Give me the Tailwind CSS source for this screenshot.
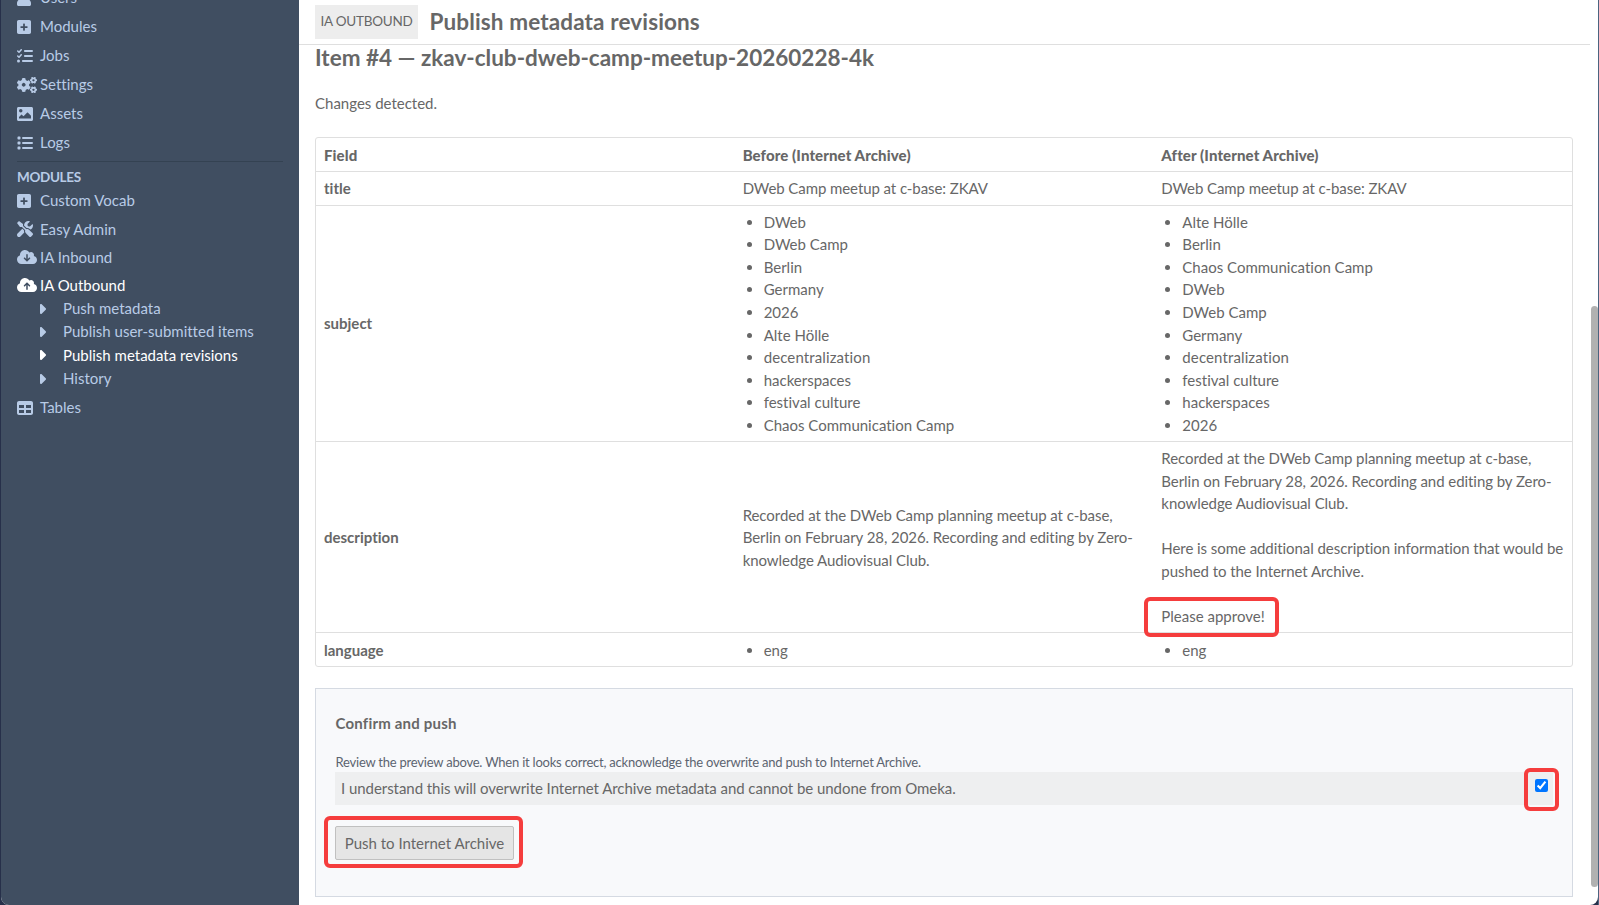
<!DOCTYPE html>
<html lang="en">
<head>
<meta charset="utf-8">
<title>Publish metadata revisions</title>
<script src="https://cdn.jsdelivr.net/npm/@tailwindcss/browser@4"></script>
</head>
<body class="relative flex h-[905px] w-[1599px] overflow-hidden bg-[#27304a] font-['Lato',sans-serif] text-[15px] leading-[22.5px] text-[#676767] [font-variant-ligatures:none]">
<svg class="hidden">
<symbol id="plus" viewBox="0 0 448 512"><path d="M56 32C25 32 0 57 0 88v336c0 31 25 56 56 56h336c31 0 56-25 56-56V88c0-31-25-56-56-56H56zm140 320v-68h-68c-13 0-20-7-20-18v-20c0-11 7-18 20-18h68v-68c0-13 7-20 18-20h20c11 0 18 7 18 20v68h68c13 0 20 7 20 18v20c0 11-7 18-20 18h-68v68c0 13-7 20-18 20h-20c-11 0-18-7-18-20z"/></symbol>
<symbol id="user" viewBox="0 0 448 512"><path d="M224 256a128 128 0 1 0 0-256 128 128 0 1 0 0 256zm89.600 32h-16.700c-22.200 10.200-46.900 16-72.900 16s-50.600-5.800-72.900-16h-16.700C60.200 288 0 348.200 0 422.400V464c0 26.500 21.500 48 48 48h352c26.500 0 48-21.500 48-48v-41.600c0-74.200-60.200-134.400-134.400-134.400z"/></symbol>
<symbol id="tasks" viewBox="0 0 512 512"><path d="M152 38c10 9 11 24 2 34l-72 80a24 24 0 0 1-35 1L7 113a24 24 0 0 1 34-34l22 22 55-61c9-10 24-11 34-2zm0 160c10 9 11 24 2 34l-72 80a24 24 0 0 1-35 1L7 273a24 24 0 0 1 34-34l22 22 55-61c9-10 24-11 34-2zM224 96c0-18 14-32 32-32h224a32 32 0 0 1 0 64H256c-18 0-32-14-32-32zm0 160c0-18 14-32 32-32h224a32 32 0 0 1 0 64H256c-18 0-32-14-32-32zm-64 160c0-18 14-32 32-32h288a32 32 0 0 1 0 64H192c-18 0-32-14-32-32zM48 368a48 48 0 1 1 0 96 48 48 0 1 1 0-96z"/></symbol>
<symbol id="list" viewBox="0 0 512 512"><path d="M40 48C27 48 16 59 16 72v48c0 13 11 24 24 24h48c13 0 24-11 24-24V72c0-13-11-24-24-24H40zm152 16a32 32 0 0 0 0 64h288a32 32 0 0 0 0-64H192zm0 160a32 32 0 0 0 0 64h288a32 32 0 0 0 0-64H192zm0 160a32 32 0 0 0 0 64h288a32 32 0 0 0 0-64H192zM16 232v48c0 13 11 24 24 24h48c13 0 24-11 24-24v-48c0-13-11-24-24-24H40c-13 0-24 11-24 24zm24 136c-13 0-24 11-24 24v48c0 13 11 24 24 24h48c13 0 24-11 24-24v-48c0-13-11-24-24-24H40z"/></symbol>
<symbol id="cogs" viewBox="0 0 640 512"><path fill-rule="evenodd" d="M512 191l-8 14c-3 5-10 8-16 5-12-4-23-11-32-19-4-4-6-11-3-16l8-14c-7-8-12-17-16-27h-16c-6 0-12-4-13-11a112 112 0 0 1 0-37c1-6 7-11 13-11h16c4-10 9-19 16-27l-8-14c-3-5-2-12 3-16 9-8 20-15 32-19 6-2 13 0 16 5l8 14c10-2 21-2 31 0l8-14c3-5 10-8 16-5 12 4 23 11 32 19 5 4 6 11 3 16l-8 14c7 8 12 17 16 27h16c6 0 12 4 13 11 2 12 2 25 0 37-1 6-7 11-13 11h-16c-4 10-9 19-16 27l8 14c3 5 2 12-3 16-9 8-20 15-32 19-6 2-13 0-16-5l-8-14c-10 2-21 2-31 0zM505 128a32 32 0 1 0 45-45 32 32 0 1 0-45 45zM386 286l34 17c10 6 14 18 11 29-9 24-27 46-43 65-7 9-20 11-30 5l-29-17a192 192 0 0 1-54 31v34c0 11-8 21-19 23a224 224 0 0 1-80 0c-12-2-20-12-20-23v-34a192 192 0 0 1-54-31l-29 17c-10 6-23 4-30-5-16-19-33-41-42-65-4-11 0-23 10-29l33-17a168 168 0 0 1 0-62l-33-17c-10-6-14-18-10-29 9-24 26-46 42-65 7-9 20-11 30-5l29 17a192 192 0 0 1 54-31V60c0-11 8-21 19-23 26-5 54-5 81 0 11 2 19 12 19 23v34a192 192 0 0 1 54 31l29-17c10-6 23-4 30 5 16 19 33 41 42 65 4 11 0 23-10 29l-34 17a168 168 0 0 1 0 62zM255 290a58 58 0 1 0-82-82 58 58 0 1 0 82 82zM512 495l-8 14c-3 5-10 8-16 5-12-4-23-11-32-19-4-4-6-11-3-16l8-14c-7-8-12-17-16-27h-16c-6 0-12-4-13-11a112 112 0 0 1 0-37c1-6 7-11 13-11h16c4-10 9-19 16-27l-8-14c-3-5-2-12 3-16 9-8 20-15 32-19 6-2 13 0 16 5l8 14c10-2 21-2 31 0l8-14c3-5 10-8 16-5 12 4 23 11 32 19 5 4 6 11 3 16l-8 14c7 8 12 17 16 27h16c6 0 12 4 13 11 2 12 2 25 0 37-1 6-7 11-13 11h-16c-4 10-9 19-16 27l8 14c3 5 2 12-3 16-9 8-20 15-32 19-6 2-13 0-16-5l-8-14c-10 2-21 2-31 0zM505 432a32 32 0 1 0 45-45 32 32 0 1 0-45 45z"/></symbol>
<symbol id="image" viewBox="0 0 512 512"><path d="M48 32h416c26.500 0 48 21.500 48 48v352c0 26.500-21.500 48-48 48H48c-26.500 0-48-21.500-48-48V80c0-26.500 21.500-48 48-48zM64 400h384v-86L345 211c-5-5-12-5-17 0L208 331l-55-55c-5-5-12-5-17 0l-72 72v52zM120 96a56 56 0 1 0 0 112 56 56 0 1 0 0-112z" fill-rule="evenodd"/></symbol>
<symbol id="tools" viewBox="0 0 512 512"><path d="M501.100 395.700L384 278.600c-23.100-23.100-57.600-27.600-85.400-13.900L192 158.100V96L64 0 0 64l96 128h62.100l106.600 106.600c-13.600 27.800-9.200 62.300 13.900 85.400l117.100 117.100c14.600 14.600 38.200 14.600 52.700 0l52.700-52.700c14.500-14.600 14.500-38.200 0-52.700zM331.700 225c28.300 0 54.900 11 74.900 31l19.400 19.400c15.800-6.900 30.800-16.500 43.800-29.500 37.100-37.100 49.700-89.300 37.900-136.700-2.200-9-13.500-12.100-20.100-5.500l-74.400 74.400-67.900-11.300L334 98.900l74.400-74.400c6.600-6.600 3.400-17.900-5.700-20.200-47.400-11.700-99.600.9-136.600 37.900-28.500 28.500-41.900 66.100-41.200 103.600l82.100 82.100c8.100-1.900 16.500-2.900 24.700-2.900zm-103.900 82l-56.700-56.700L18.700 402.800c-25 25-25 65.500 0 90.500s65.500 25 90.500 0l123.600-123.600c-7.600-19.900-9.900-41.600-5-62.700z"/></symbol>
<symbol id="down" viewBox="0 0 640 512"><path d="M144 480C64.500 480 0 415.500 0 336c0-62.800 40.200-116.200 96.200-135.900-.1-2.700-.2-5.400-.2-8.100 0-88.400 71.600-160 160-160 59.300 0 111 32.200 138.700 80.200C409.900 102 428.300 96 448 96c53 0 96 43 96 96 0 12.200-2.300 23.800-6.400 34.600C596 238.400 640 290.100 640 352c0 70.700-57.300 128-128 128H144zm79-167l80 80c9.400 9.400 24.600 9.400 33.900 0l80-80c9.400-9.400 9.400-24.600 0-33.900s-24.600-9.400-33.900 0l-39 39V184c0-13.300-10.700-24-24-24s-24 10.700-24 24v134.100l-39-39c-9.400-9.400-24.600-9.400-33.900 0s-9.400 24.600 0 33.900z"/></symbol>
<symbol id="up" viewBox="0 0 640 512"><path d="M144 480C64.500 480 0 415.500 0 336c0-62.800 40.200-116.200 96.200-135.900-.1-2.700-.2-5.400-.2-8.100 0-88.400 71.600-160 160-160 59.300 0 111 32.200 138.700 80.200C409.900 102 428.300 96 448 96c53 0 96 43 96 96 0 12.200-2.300 23.800-6.400 34.600C596 238.400 640 290.100 640 352c0 70.700-57.300 128-128 128H144zm79-217c-9.400 9.400-9.400 24.600 0 33.900s24.600 9.400 33.900 0l39-39V392c0 13.300 10.700 24 24 24s24-10.700 24-24V257.900l39 39c9.400 9.400 24.600 9.400 33.900 0s9.400-24.600 0-33.900l-80-80c-9.400-9.400-24.600-9.400-33.900 0l-80 80z"/></symbol>
<symbol id="table" viewBox="0 0 512 512"><path d="M64 256v-96h160v96H64zm0 64h160v96H64v-96zm224 96v-96h160v96H288zm160-160H288v-96h160v96zM64 32C28.700 32 0 60.700 0 96v320c0 35.300 28.700 64 64 64h384c35.300 0 64-28.700 64-64V96c0-35.300-28.700-64-64-64H64z"/></symbol>
<symbol id="caret" viewBox="0 0 256 512"><path d="M246.600 278.600c12.500-12.500 12.500-32.800 0-45.300l-128-128C109.500 96.200 95.700 93.500 83.700 98.500S64 115.100 64 128v256c0 12.900 7.800 24.600 19.800 29.600s25.700 2.200 34.900-6.900l128-128z"/></symbol>
</svg>
<div class="ml-px flex w-[1597px] overflow-hidden rounded-b-[8px] bg-white">
<aside class="w-[298px] shrink-0 bg-[#404e61] pl-4 text-[#b8cbe6]">
  <nav class="-mt-[17px] fill-current">
    <a class="flex h-[29px] items-center"><svg class="h-4 w-[14px]"><use href="#user"/></svg><span class="ml-[9px]">Users</span></a>
    <a class="flex h-[29px] items-center"><svg class="h-4 w-[14px]"><use href="#plus"/></svg><span class="ml-[9px]">Modules</span></a>
    <a class="flex h-[29px] items-center"><svg class="h-4 w-4"><use href="#tasks"/></svg><span class="ml-[7px]">Jobs</span></a>
    <a class="flex h-[29px] items-center"><svg class="h-4 w-5"><use href="#cogs"/></svg><span class="ml-[3px]">Settings</span></a>
    <a class="flex h-[29px] items-center"><svg class="h-4 w-4"><use href="#image"/></svg><span class="ml-[7px]">Assets</span></a>
    <a class="flex h-[29px] items-center"><svg class="h-4 w-4"><use href="#list"/></svg><span class="ml-[7px]">Logs</span></a>
    <div class="mr-4 mt-[4px] h-px bg-[#344252]"></div>
    <h4 class="mt-[5px] h-[21px] text-[13.5px] font-bold leading-[21px] tracking-[-0.35px]">MODULES</h4>
    <a class="-mt-[2px] flex h-[29px] items-center"><svg class="h-4 w-[14px]"><use href="#plus"/></svg><span class="ml-[9px]">Custom Vocab</span></a>
    <a class="flex h-[28px] items-center"><svg class="h-4 w-4"><use href="#tools"/></svg><span class="ml-[7px] tracking-[0.05px]">Easy Admin</span></a>
    <a class="flex h-[28px] items-center"><svg class="h-4 w-5"><use href="#down"/></svg><span class="ml-[3px]">IA Inbound</span></a>
    <a class="flex h-[28px] items-center text-white"><svg class="h-4 w-5"><use href="#up"/></svg><span class="ml-[3px]">IA Outbound</span></a>
    <a class="-mt-[2px] flex h-[23px] items-center pl-[21px]"><svg class="h-4 w-2"><use href="#caret"/></svg><span class="ml-[17px]">Push metadata</span></a>
    <a class="flex h-[23px] items-center pl-[21px]"><svg class="h-4 w-2"><use href="#caret"/></svg><span class="ml-[17px]">Publish user-submitted items</span></a>
    <a class="flex h-[24px] items-center pl-[21px] text-white"><svg class="h-4 w-2"><use href="#caret"/></svg><span class="ml-[17px]">Publish metadata revisions</span></a>
    <a class="flex h-[23px] items-center pl-[21px]"><svg class="h-4 w-2"><use href="#caret"/></svg><span class="ml-[17px]">History</span></a>
    <a class="mt-[3px] flex h-[29px] items-center"><svg class="h-4 w-4"><use href="#table"/></svg><span class="ml-[7px]">Tables</span></a>
  </nav>
</aside>
<main class="relative flex-1">
  <header class="mr-[8px] flex h-[45px] items-start border-b border-[#dfdfdf] pl-4 pt-[5px]">
    <span class="flex h-[34px] w-[103px] items-center justify-center whitespace-nowrap bg-[#ededed] pb-[2px] text-[13.5px] tracking-[-0.25px]">IA OUTBOUND</span>
    <h1 class="ml-[11.5px] text-[22.5px] font-bold leading-[34px] tracking-[0.13px]">Publish metadata revisions</h1>
  </header>
  <div class="w-[1274px] pl-4">
    <h2 class="-mt-[4px] text-[22.5px] font-bold leading-[34px]">Item #4 — zkav-club-dweb-camp-meetup-20260228-4k</h2>
    <p class="mt-[17px]">Changes detected.</p>
    <section class="mt-[22.5px] divide-y divide-[#dfdfdf] rounded-[3px] border border-[#dfdfdf] [&>div]:grid [&>div]:grid-cols-3 [&>div]:items-center [&>div>*]:px-2">
      <div class="h-[34px] font-bold tracking-[0.1px]"><b class="pt-px">Field</b><b class="pt-px">Before (Internet Archive)</b><b class="pt-px">After (Internet Archive)</b></div>
      <div class="h-[34px] tracking-[-0.08px]"><b class="tracking-normal">title</b><span>DWeb Camp meetup at c-base: ZKAV</span><span>DWeb Camp meetup at c-base: ZKAV</span></div>
      <div class="h-[236px] leading-[22.55px] [&_ul]:list-disc [&_li]:ml-[21px]"><b>subject</b>
        <ul><li>DWeb</li><li>DWeb Camp</li><li>Berlin</li><li>Germany</li><li>2026</li><li>Alte Hölle</li><li class="tracking-[0.12px]">decentralization</li><li>hackerspaces</li><li>festival culture</li><li>Chaos Communication Camp</li></ul>
        <ul><li>Alte Hölle</li><li>Berlin</li><li>Chaos Communication Camp</li><li>DWeb</li><li>DWeb Camp</li><li>Germany</li><li class="tracking-[0.12px]">decentralization</li><li>festival culture</li><li>hackerspaces</li><li>2026</li></ul></div>
      <div class="h-[191px] whitespace-nowrap tracking-[-0.06px]"><b class="tracking-normal">description</b>
        <p class="pt-px">Recorded at the DWeb Camp planning meetup at c-base,<br>Berlin on February 28, 2026. Recording and editing by Zero-<br>knowledge Audiovisual Club.</p>
        <div>Recorded at the DWeb Camp planning meetup at c-base,<br>Berlin on February 28, 2026. Recording and editing by Zero-<br>knowledge Audiovisual Club.<br><br>Here is some additional description information that would be<br>pushed to the Internet Archive.<br><br><span class="relative tracking-normal">Please approve!<i class="absolute -left-[17px] -top-[10px] h-[40px] w-[135px] rounded-[6px] border-4 border-[#f53d3d]"></i></span></div></div>
      <div class="h-[33px] [&_ul]:list-disc [&_li]:ml-[21px]"><b class="pt-px">language</b><ul class="pt-px"><li>eng</li></ul><ul class="pt-px"><li>eng</li></ul></div>
    </section>
    <section class="mt-[21px] h-[209px] border border-[#d5dae2] bg-[#f8f9fb] px-[19px] pt-[23px]">
      <h3 class="pl-[0.5px] font-bold tracking-[0.2px]">Confirm and push</h3>
      <p class="mt-[18.5px] h-[19px] whitespace-nowrap pl-[0.5px] text-[13px] leading-[19px] tracking-[-0.22px] text-[#5c6470]">Review the preview above. When it looks correct, acknowledge the overwrite and push to Internet Archive.</p>
      <label class="relative flex h-[33px] items-center bg-[#eeeff0] pl-[6px] tracking-[-0.05px]">I understand this will overwrite Internet Archive metadata and cannot be undone from Omeka.
        <input type="checkbox" checked class="absolute right-[5px] top-[7px] size-[13px] accent-[#0075ff]">
        <i class="absolute -right-[6px] -top-[4px] h-[43px] w-[35px] rounded-[6px] border-4 border-[#f53d3d]"></i></label>
      <button class="relative mt-[21px] block h-[34px] w-[179px] whitespace-nowrap rounded-[2px] border border-[#c0c0c0] bg-[#e5e5e5]">Push to Internet Archive<i class="absolute -left-[12px] -top-[11px] h-[52px] w-[199px] rounded-[6px] border-4 border-[#f53d3d]"></i></button>
    </section>
  </div>
  <div class="absolute right-0 top-[306px] h-[581px] w-[7px] rounded-full bg-[#b1b1b1]"></div>
</main>
</div>
<div class="w-px bg-[#4a6480]"></div>
</body>
</html>
